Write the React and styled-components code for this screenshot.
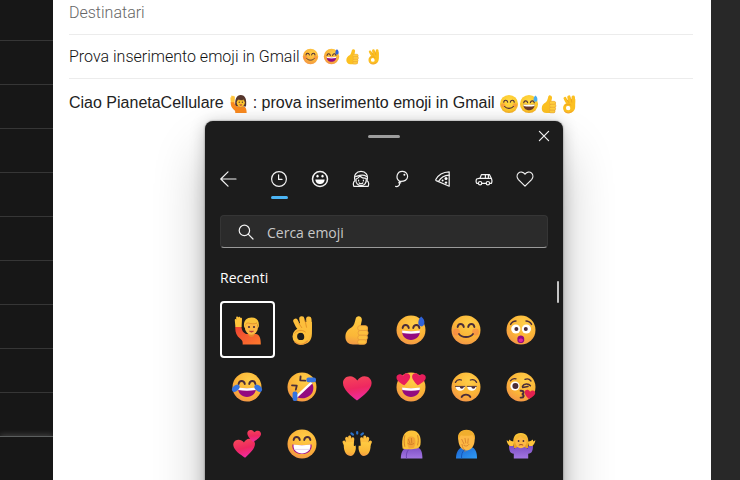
import React, {useState} from 'react'
import styled, {createGlobalStyle, css} from 'styled-components'

const INK = '#4a2d3a'

const Gradients = () => (
  <HiddenSvg width="0" height="0" aria-hidden="true">
    <defs>
      <radialGradient id="face" cx="0.6" cy="0.28" r="0.85">
        <stop offset="0" stopColor="#ffce48" />
        <stop offset="0.55" stopColor="#fbb437" />
        <stop offset="0.85" stopColor="#f49a44" />
        <stop offset="1" stopColor="#e9667c" />
      </radialGradient>
      <radialGradient id="faceFlat" cx="0.5" cy="0.35" r="0.7">
        <stop offset="0" stopColor="#ffdb45" />
        <stop offset="0.75" stopColor="#fcc52a" />
        <stop offset="1" stopColor="#f2a11f" />
      </radialGradient>
      <linearGradient id="skin" x1="0.5" y1="0" x2="0.4" y2="1">
        <stop offset="0" stopColor="#ffcb42" />
        <stop offset="0.7" stopColor="#fbb738" />
        <stop offset="1" stopColor="#f29a45" />
      </linearGradient>
      <linearGradient id="hair" x1="0" y1="0" x2="0" y2="1">
        <stop offset="0" stopColor="#fdcc3c" />
        <stop offset="1" stopColor="#e89a22" />
      </linearGradient>
      <linearGradient id="heart" x1="0.3" y1="0" x2="0.5" y2="1">
        <stop offset="0" stopColor="#f5455a" />
        <stop offset="0.5" stopColor="#ee2860" />
        <stop offset="1" stopColor="#f02ba4" />
      </linearGradient>
      <linearGradient id="orange" x1="0" y1="0" x2="1" y2="1">
        <stop offset="0" stopColor="#ee4232" />
        <stop offset="1" stopColor="#ff7a2c" />
      </linearGradient>
      <linearGradient id="purple" x1="0" y1="0" x2="0" y2="1">
        <stop offset="0" stopColor="#7d4fc4" />
        <stop offset="1" stopColor="#a276e2" />
      </linearGradient>
      <linearGradient id="blue" x1="0" y1="0" x2="1" y2="1">
        <stop offset="0" stopColor="#1b62cf" />
        <stop offset="1" stopColor="#2f9bf5" />
      </linearGradient>
    </defs>
  </HiddenSvg>
)

const HEART = 'M16 29.5C10 25 2 18.5 2 12C2 8 5 5.2 9 5.2C12 5.2 14.5 6.8 16.3 9.5C18 6.8 20.5 5.2 23.5 5.2C27.5 5.2 30.6 8 30.6 12C30.6 18.5 22 25 16 29.5Z'

const Face = ({flat}) => <circle cx="16" cy="16" r="14.5" fill={flat ? 'url(#faceFlat)' : 'url(#face)'} />

const HappyEyes = ({y = 13}) => (
  <g fill="none" stroke={INK} strokeWidth="1.9" strokeLinecap="round">
    <path d={`M7.6 ${y}C8.2 ${y - 4} 13 ${y - 4} 13.8 ${y}`} />
    <path d={`M18.2 ${y}C19 ${y - 4} 23.8 ${y - 4} 24.4 ${y}`} />
  </g>
)

const Laugh = ({flat}) => (
  <>
    <path d="M7 16.8Q16 18.2 25 16.8C25 22.6 21 26 16 26C11 26 7 22.6 7 16.8Z" fill={flat ? '#6b3a2a' : '#930a80'} />
    <path d="M7 16.6Q16 18 25 16.6L24.7 19Q16 20.6 7.3 19Z" fill="#fff" />
  </>
)

const drawings = {
  sweat: flat => (
    <>
      <Face flat={flat} />
      <HappyEyes y={14} />
      <Laugh flat={flat} />
      <path
        d="M26.2 2.4C29 4.5 29.6 7 29.4 9C29.2 11.2 28 12.4 26.4 12.4C24.6 12.4 23.2 11 23.3 8.8C23.4 6.5 24 4.3 26.2 2.4Z"
        fill={flat ? '#49aef0' : '#2f62d8'}
      />
    </>
  ),
  blush: flat => (
    <>
      <Face flat={flat} />
      <circle cx="6.5" cy="18" r="3.4" fill="#f4694e" opacity="0.4" />
      <circle cx="25.5" cy="18" r="3.4" fill="#f4694e" opacity="0.4" />
      <HappyEyes y={13} />
      <path d="M9 20C12 24 20 24 23 20" fill="none" stroke={INK} strokeWidth="1.8" strokeLinecap="round" />
    </>
  ),
  ok: flat => (
    <>
      <path d="M11 11L16 8L25.9 8V20C25.9 26.4 22 30.6 15.4 30.6C19 28 20.6 21 14.6 17.6Z" fill={flat ? '#fcc021' : '#fbba38'} />
      <g fill="none" stroke={flat ? '#fcc021' : '#fdbf3c'} strokeLinecap="round">
        <path d="M9.6 7C10.6 10 12.6 13 15.4 16" strokeWidth="4.8" />
        <path d="M15.8 4.8C16.2 9 17.6 12 19.4 16" strokeWidth="5.2" />
        <path d="M22.8 5.2C23.4 9 23.4 14 22.8 19" strokeWidth="5.4" />
        <circle cx="14.8" cy="22.4" r="6" strokeWidth="4.6" />
      </g>
      <path d="M12.4 8.6L16 14M18.8 5.6L20.6 13.6M8.6 19.6C11 16 16 15.2 19.6 18.2" fill="none" stroke="#e08a24" strokeWidth="0.8" />
      <path d="M9 28C12.6 31.4 18 31 21.4 27" fill="none" stroke="#ee9638" strokeWidth="1.2" strokeLinecap="round" />
    </>
  ),
  thumb: flat => (
    <>
      <path
        d="M14.6 5C15 3 16.4 2 18 2.2C20.2 2.5 21.2 4.4 20.8 6.6L19.6 12H24C26 12 27 13.2 26.8 15L26 27C25.8 29.4 24.6 30.5 22 30.5H12C7.4 30.5 4.4 27.4 4.4 23C4.4 18 7 15.6 10.4 13.6C13 11.6 13.8 8.6 14.6 5Z"
        fill={flat ? '#fcc021' : 'url(#skin)'}
      />
      <g fill={flat ? '#ffcf3d' : '#fdbf3e'} stroke="#e4953a" strokeWidth="0.7">
        <rect x="16.6" y="11.6" width="10" height="5" rx="2.5" />
        <rect x="17" y="16.4" width="10.2" height="5" rx="2.5" />
        <rect x="16.8" y="21.2" width="9.8" height="4.8" rx="2.4" />
        <rect x="16.6" y="25.8" width="8.8" height="4.4" rx="2.2" />
      </g>
    </>
  ),
  raising: flat => (
    <>
      {flat && <path d="M11.6 20C10.6 8 13.6 1.6 20.4 1.6C27.4 1.6 30.2 8 28.8 20Z" fill="#56362d" />}
      <path d="M4.3 12.6H10.4C10.6 16.4 12 19 15 20H25C28.4 20.6 29.8 23.6 29.8 30.5H11.6C12 27 11 26.4 9 24.6C5.4 21.6 4 18 4.3 12.6Z" fill={flat ? '#f98a1f' : 'url(#orange)'} />
      <path d="M4.4 13L3.8 6.4C3.6 4.8 5 4.6 5.2 5.8L5.2 3.6C5.2 2.2 7 2.2 7.2 3.4C7.6 2.2 9.4 2.6 9.4 4C10.4 3.4 11.2 4.2 11 5.4L10.6 13Z" fill="#ffc43b" />
      <path d="M17.4 18H23.4V21C22 23.6 18.8 23.6 17.4 21Z" fill="#e88b2c" />
      <ellipse cx="20.4" cy="13.2" rx="6.6" ry="7.6" fill={flat ? '#fdc52f' : '#fdb944'} />
      <path
        d="M13.2 14C12 7.4 14.8 3.4 20.6 3.4C26.6 3.4 28.8 7.6 27.6 14C26.6 12 26.4 10 25.2 8.6C21.8 10 18 9.4 16 8.6C14.8 9.8 14.4 12 13.2 14Z"
        fill={flat ? '#56362d' : '#f9c33a'}
      />
      <path d="M14.8 10.4C16 9 17 8.8 18 9.2C20.4 10 23.4 9.8 25.8 9.4" fill="none" stroke={flat ? '#56362d' : '#d98a24'} strokeWidth="0.7" />
      <circle cx="18" cy="13" r="1.1" fill={INK} />
      <circle cx="23" cy="13" r="1.1" fill={INK} />
      <path d="M18.4 17.2Q20.5 19.2 22.6 17.2Z" fill="#b02a3c" stroke="#b02a3c" strokeWidth="0.5" />
    </>
  ),
  astonished: () => (
    <>
      <Face />
      <path d="M5.6 10.4C6.8 8 8.6 7 11 7M21 7C23.4 7 25.2 8 26.6 10.4" fill="none" stroke={INK} strokeWidth="1.4" strokeLinecap="round" />
      <circle cx="10.8" cy="15" r="4.6" fill="#fff" />
      <circle cx="21.4" cy="15" r="4.6" fill="#fff" />
      <circle cx="11.4" cy="15" r="2" fill={INK} />
      <circle cx="20.8" cy="15" r="2" fill={INK} />
      <path d="M12.4 24.4C12.4 20.4 19.2 20.4 19.2 24.4V26.4C19.2 29.8 12.4 29.8 12.4 26.4Z" fill="#930a80" />
      <path d="M13.6 26C14 24 17.6 24 18 26C17.8 28.8 13.8 28.8 13.6 26Z" fill="#e0269a" />
    </>
  ),
  joy: () => (
    <>
      <Face />
      <HappyEyes y={13} />
      <Laugh />
      <ellipse cx="4.8" cy="17.2" rx="4.4" ry="2.8" transform="rotate(-42 4.8 17.2)" fill="#3573e0" />
      <ellipse cx="27.2" cy="17.2" rx="4.4" ry="2.8" transform="rotate(42 27.2 17.2)" fill="#3573e0" />
    </>
  ),
  rofl: () => (
    <>
      <Face />
      <path d="M14.6 5.4L14.2 9.4L19.2 9.6M6 14.4L10.8 14.6L9.8 18.6" fill="none" stroke={INK} strokeWidth="1.8" strokeLinecap="round" strokeLinejoin="round" />
      <path d="M10.6 26L25.6 11.4C28.6 15.6 27.6 21.2 24.2 24.2C20.6 27.4 15.2 28.4 10.6 26Z" fill="#930a80" />
      <path d="M9.6 25L24.8 10.8L26.4 12.6L11.4 26.4Z" fill="#fff" />
      <rect x="20.4" y="6.4" width="9.6" height="4.8" rx="2" fill="#3573e0" />
      <rect x="6.6" y="20.6" width="4.8" height="9.4" rx="2" fill="#3573e0" />
    </>
  ),
  heart: () => <path d={HEART} fill="url(#heart)" />,
  heartEyes: () => (
    <>
      <Face />
      <Laugh />
      <g fill="#e81e5c">
        <path d={HEART} transform="translate(0.8 0.2) rotate(-8 8 8) scale(0.48)" />
        <path d={HEART} transform="translate(15.8 0.2) rotate(8 8 8) scale(0.48)" />
      </g>
    </>
  ),
  unamused: () => (
    <>
      <Face />
      <path d="M5.4 11.4C6.6 9.2 9 8.2 11.4 9M20.4 9C23 8.2 25.4 9.2 26.6 11.4" fill="none" stroke={INK} strokeWidth="1.3" strokeLinecap="round" />
      <path d="M5.6 15.6H14.8C14.8 21.2 5.6 21.2 5.6 15.6ZM17.2 15.6H26.4C26.4 21.2 17.2 21.2 17.2 15.6Z" fill="#fff" />
      <path d="M9.8 15.6H13.8C13.8 18.6 9.8 18.6 9.8 15.6ZM21.4 15.6H25.4C25.4 18.6 21.4 18.6 21.4 15.6Z" fill={INK} />
      <path d="M5.4 15.4H14.8M17.2 15.4H26.4" stroke={INK} strokeWidth="0.9" strokeLinecap="round" />
      <path d="M11.6 26C13.4 22.8 18.6 22.8 20.4 26" fill="none" stroke={INK} strokeWidth="1.8" strokeLinecap="round" />
    </>
  ),
  kiss: () => (
    <>
      <Face />
      <path d="M5.4 9.8C6.8 7.8 9 7.2 11 7.8M20 8.4C22 7.4 24.4 8 26 10" fill="none" stroke={INK} strokeWidth="1.3" strokeLinecap="round" />
      <circle cx="10" cy="15" r="4.6" fill="#fff" />
      <circle cx="10.4" cy="15" r="3" fill={INK} />
      <path d="M17.4 15.4C19 12.4 23.4 12 25.4 14.8M17.6 16.4L23 15.6" fill="none" stroke={INK} strokeWidth="1.5" strokeLinecap="round" />
      <path d="M15.6 19.8C19.4 19.6 19.4 22.8 16.8 23.2C19.6 23.6 19.2 27 15.6 26.6" fill="none" stroke={INK} strokeWidth="1.9" strokeLinecap="round" />
      <path d={HEART} transform="translate(19.6 16.4) rotate(8) scale(0.37)" fill="#e3214f" />
    </>
  ),
  hearts: () => (
    <g fill="url(#heart)">
      <path d={HEART} transform="translate(0 8.4) rotate(-5) scale(0.76)" />
      <path d={HEART} transform="translate(16 -1) rotate(6) scale(0.48)" />
    </g>
  ),
  grin: () => (
    <>
      <Face />
      <HappyEyes y={12} />
      <path d="M6.4 16.4Q16 18 25.6 16.4C26.4 22.6 21.6 26 16 26C10.4 26 5.6 22.6 6.4 16.4Z" fill="#a3128c" />
      <path d="M7.6 16.6Q16 18 24.4 16.6C25.2 22.4 21 25.4 16 25.4C11 25.4 6.8 22.4 7.6 16.6Z" fill="#fff" />
      <path d="M7.8 21.4H24.2" stroke="#d5c5e6" strokeWidth="0.7" />
    </>
  ),
  hands: () => (
    <>
      <g fill="none" stroke="#fdbd3e" strokeWidth="3" strokeLinecap="round">
        <path d="M3 14L6 20M5.6 10.4L7.4 18M8.6 9L9.4 18M11.8 10.8L11 19" />
        <path d="M29.4 14L26.4 20M26.8 10.4L25 18M23.8 9L23 18M20.6 10.8L21.4 19" />
      </g>
      <path d="M3 14.6L12.4 14C12 18 13 19 14.4 17.2C15.8 19.8 14 28 9.4 28C4.4 28 2 21.6 3 14.6Z" fill="url(#skin)" />
      <path d="M29.4 14.6L20 14C20.4 18 19.4 19 18 17.2C16.6 19.8 18.4 28 23 28C28 28 30.4 21.6 29.4 14.6Z" fill="url(#skin)" />
      <path d="M10.4 5.4L12 6.6M16.2 4V5.6M22 5.4L20.4 6.6" stroke="#2a6fc4" strokeWidth="2.2" strokeLinecap="round" />
    </>
  ),
  facepalmWoman: () => (
    <>
      <path d="M5.8 30.5C5.8 23 9 18.8 16 18.8H22C26 20.6 27.4 24 27.4 30.5Z" fill="url(#purple)" />
      <path d="M7.6 20.4C6 9 9 2.4 16.6 2.4C23.8 2.4 26.8 8.6 25.4 17C24.8 19.4 23 20.8 20 20.8C15 21.4 12 21.8 7.6 20.4Z" fill="#fcc23a" />
      <path d="M12.6 10.4C14 7.8 18.6 7.8 20 10.6C21 14 20.4 18 18.6 20L14 20.4C12 17.4 11.8 13.6 12.6 10.4Z" fill="#f2a437" />
      <path d="M13.4 11.4L15 15.4M16.4 10.4L16.8 15M12.8 15.4C14.4 17 17 17 18.8 15.6M9.8 7.6C8.8 11 9 15 9.8 18.4M22.6 7.6C23.8 11 23.4 14 22.6 17" fill="none" stroke="#cf7c25" strokeWidth="0.9" strokeLinecap="round" />
      <path d="M13.4 21.8C11.4 24.4 11 27.4 11.6 30.5" fill="none" stroke="#6a42b0" strokeWidth="0.9" />
    </>
  ),
  facepalmMan: () => (
    <>
      <path d="M6 30.5C6 23.6 9 19.4 14 18.8H21C25.4 20.4 27 24 27 30.5Z" fill="url(#blue)" />
      <path d="M8.4 13C7.4 6 10.6 2.2 16.4 2.2C22.6 2.2 25.4 6.6 24.6 13C24 19 20.6 22.4 16.6 22.4C12.2 22.4 9 18.6 8.4 13Z" fill="#fdb944" />
      <path d="M8.2 12C7.2 5.4 10.6 1.8 16.4 1.8C22.6 1.8 25.6 5.4 24.8 12C23.6 10 23.4 8.2 22.4 7C18.4 8.2 14 8 11 7.2C9.8 8.4 9.2 10 8.2 12Z" fill="#f0ae2e" />
      <path d="M11.8 11.4L14 16M15 10.4L15.8 15M18.2 10.8L17.8 15.4M12 16.4C12.4 19.4 13.6 21.6 15 23.4M14 17.6C16 18.6 18 18 19 16.4" fill="none" stroke="#d47c2c" strokeWidth="0.8" strokeLinecap="round" />
      <path d="M14.6 21.6C12 24 11.2 27 11.6 30.5" fill="none" stroke="#1452b4" strokeWidth="0.9" />
    </>
  ),
  shrug: () => (
    <>
      <path d="M8.6 20C7 10 9.4 5 15.8 5C22.2 5 24.4 10 23 20Z" fill="url(#hair)" />
      <path d="M4 17.8H8.4L9.4 20.4L12.6 19H19.4L22.6 20.4L23.6 17.8H28C28 22.6 26.8 25.6 23.2 25.8V30.5H8.8V25.8C5.2 25.6 4 22.6 4 17.8Z" fill="url(#purple)" />
      <path d="M1.6 12.2L4 13.4V11.4L6.4 13L9.2 13.8L8 18H4.6C3 16.4 2 14.6 1.6 12.2ZM30.4 12.2L28 13.4V11.4L25.6 13L22.8 13.8L24 18H27.4C29 16.4 30 14.6 30.4 12.2Z" fill="#ffc43b" />
      <ellipse cx="15.9" cy="13.6" rx="5.6" ry="6.6" fill="#fdb944" />
      <path d="M10 12C10 8 12.4 6.4 16 6.4C19.6 6.4 21.8 8 21.8 12C19 11.2 17 10 15.4 8C14 10 12.4 11.2 10 12Z" fill="#f4b834" />
      <circle cx="13.6" cy="13" r="0.9" fill={INK} />
      <circle cx="18.4" cy="13" r="0.9" fill={INK} />
      <path d="M14.2 17C15.4 16.4 16.6 16.4 17.8 17" fill="none" stroke="#9b3b2e" strokeWidth="0.9" strokeLinecap="round" />
    </>
  )
}

const Emoji = ({name, size, flat, label}) => (
  <EmojiSvg viewBox="0 0 32 32" $size={size} role="img" aria-label={label || name}>
    {drawings[name](flat)}
  </EmojiSvg>
)

const tabs = [
  {
    label: 'Recenti',
    icon: (
      <>
        <circle cx="9" cy="9" r="7.4" />
        <path d="M8.6 4.8V9.4H12" />
      </>
    )
  },
  {
    label: 'Faccine',
    icon: (
      <>
        <circle cx="9" cy="9" r="7.5" strokeWidth="1.5" />
        <path d="M4.4 9.4H13.6C13.6 15.6 4.4 15.6 4.4 9.4Z" fill="#fff" stroke="none" />
        <ellipse cx="6.5" cy="6.2" rx="1.1" ry="1.4" fill="#fff" stroke="none" />
        <ellipse cx="11.5" cy="6.2" rx="1.1" ry="1.4" fill="#fff" stroke="none" />
      </>
    )
  },
  {
    label: 'Persone',
    icon: (
      <>
        <path d="M3 10.4C1.4 5 4.4 1.4 9 1.4C13.6 1.4 16.6 5 15 10.4C17.2 12 16.8 14.6 16.2 16.4H1.8C1.2 14.6 0.8 12 3 10.4Z" />
        <path d="M4 9C5.8 8.6 7 7.6 7.6 6C9.4 7.6 11.6 8.4 14.2 8.4C15 13.4 12 15.6 9 15.6C6 15.6 3.4 13.4 4 9Z" />
        <path d="M3.6 6.6C6 6 10 3.4 14.6 6.4M6.6 10.2V11M11.4 10.2V11M7.2 13C8.4 14 9.6 14 10.8 13" />
      </>
    )
  },
  {
    label: 'Feste e oggetti',
    icon: (
      <>
        <path d="M6.8 11.4C4.4 10 3.6 7.4 4.2 5.2C5 2.4 7.4 1.2 9.8 1.4C12.8 1.6 14.8 4 14.6 6.8C14.4 9.8 11.4 11.8 6.8 11.4Z" />
        <path d="M7 11.6C4.4 12.4 8.4 14 5.6 15.8C4.6 16.6 3.4 16.6 2.6 16.4M5.8 12.6L7.8 12.8" />
        <circle cx="11.4" cy="4.8" r="1" fill="#fff" stroke="none" />
      </>
    )
  },
  {
    label: 'Cibo',
    icon: (
      <>
        <path d="M1.8 9.6C4.4 4.4 9 2 15.2 1.8V16.2L2.2 10.6C1.8 10.4 1.6 10 1.8 9.6Z" />
        <path d="M4.6 11.4C7 7.4 10.4 5.4 15.2 5.2" />
        <circle cx="12" cy="8.6" r="1.5" fill="#fff" stroke="none" />
        <circle cx="8.6" cy="10.6" r="1" fill="#fff" stroke="none" />
        <circle cx="12" cy="12.6" r="1.2" fill="#fff" stroke="none" />
      </>
    )
  },
  {
    label: 'Viaggi',
    icon: (
      <>
        <path d="M3.4 13.4H1.8C1.2 12.6 1 10.4 1.6 9L5 8.2L6.4 4.6H14.4L16.4 8.6C17 10 17 12.2 16.4 13.4H15M6.8 13.4H11.2" />
        <path d="M5 8.4H16M10.4 4.8V8.4M13.4 4.8V8.4" />
        <circle cx="5.1" cy="13.2" r="1.7" />
        <circle cx="12.9" cy="13.2" r="1.7" />
      </>
    )
  },
  {
    label: 'Simboli',
    icon: (
      <path d="M9 16.2L2.4 9.6C0.6 7.6 0.8 4.8 2.4 3.2C4.2 1.4 7.2 1.6 9 4.2C10.8 1.6 13.8 1.4 15.6 3.2C17.2 4.8 17.4 7.6 15.6 9.6Z" />
    )
  }
]

const recent = [
  {name: 'raising', label: 'Uomo con mano alzata'},
  {name: 'ok', label: 'Ok'},
  {name: 'thumb', label: 'Pollice in su'},
  {name: 'sweat', label: 'Sorriso con sudore'},
  {name: 'blush', label: 'Sorriso'},
  {name: 'astonished', label: 'Sorpreso'},
  {name: 'joy', label: 'Lacrime di gioia'},
  {name: 'rofl', label: 'Ridere a crepapelle'},
  {name: 'heart', label: 'Cuore'},
  {name: 'heartEyes', label: 'Occhi a cuore'},
  {name: 'unamused', label: 'Contrariato'},
  {name: 'kiss', label: 'Bacio'},
  {name: 'hearts', label: 'Due cuori'},
  {name: 'grin', label: 'Sorriso a denti stretti'},
  {name: 'hands', label: 'Mani alzate'},
  {name: 'facepalmWoman', label: 'Donna esasperata'},
  {name: 'facepalmMan', label: 'Uomo esasperato'},
  {name: 'shrug', label: 'Donna che scrolla le spalle'}
]

const EmojiPanel = () => {
  const [tab, setTab] = useState('Recenti')
  const [picked, setPicked] = useState('raising')

  return (
    <Panel aria-label="Emoji">
      <PanelHeader>
        <Grip />
        <CloseButton type="button" aria-label="Chiudi">
          <LineSvg viewBox="0 0 12 12" $size={12}>
            <path d="M1.4 1.4L10.6 10.6M10.6 1.4L1.4 10.6" />
          </LineSvg>
        </CloseButton>
      </PanelHeader>
      <Tabs>
        <BackButton type="button" aria-label="Indietro">
          <LineSvg viewBox="0 0 18 18" $size={18}>
            <path d="M8 1.8L0.8 9L8 16.2M0.8 9H16" />
          </LineSvg>
        </BackButton>
        {tabs.map(({label, icon}) => (
          <Tab key={label} type="button" aria-label={label} $active={tab === label} onClick={() => setTab(label)}>
            <LineSvg viewBox="0 0 18 18" $size={18}>
              {icon}
            </LineSvg>
          </Tab>
        ))}
      </Tabs>
      <SearchBox>
        <LineSvg viewBox="0 0 18 18" $size={18}>
          <circle cx="7.4" cy="7.4" r="5.2" />
          <path d="M11.2 11.2L16 16" />
        </LineSvg>
        <SearchInput type="text" placeholder="Cerca emoji" aria-label="Cerca emoji" />
      </SearchBox>
      <SectionTitle>Recenti</SectionTitle>
      <Grid>
        {recent.map(({name, label}) => (
          <Cell key={name} type="button" $selected={picked === name} onClick={() => setPicked(name)}>
            <Emoji name={name} size={32} label={label} />
          </Cell>
        ))}
      </Grid>
      <ScrollThumb />
    </Panel>
  )
}

const App = () => (
  <>
    <GlobalStyle />
    <Gradients />
    <Page>
      <MailList>
        <MailRows>
          {[...Array(9)].map((_, i) => (
            <MailRow key={i} />
          ))}
        </MailRows>
        <MailFooter />
      </MailList>
      <Compose>
        <Field>
          <FieldInput type="text" placeholder="Destinatari" aria-label="Destinatari" />
        </Field>
        <Field>
          <FieldInput type="text" defaultValue="Prova inserimento emoji in Gmail" aria-label="Oggetto" $fit />
          <SubjectEmojis>
            <Emoji name="blush" size={17} />
            <Emoji name="sweat" size={17} />
            <Emoji name="thumb" size={17} flat />
            <Emoji name="ok" size={17} flat />
          </SubjectEmojis>
        </Field>
        <Message role="textbox" aria-label="Corpo del messaggio">
          Ciao PianetaCellulare <Emoji name="raising" size={20} flat /> : prova inserimento emoji in Gmail{' '}
          <Emoji name="blush" size={20} flat />
          <Emoji name="sweat" size={20} flat />
          <Emoji name="thumb" size={20} flat />
          <Emoji name="ok" size={20} flat />
        </Message>
        <EmojiPanel />
      </Compose>
      <Backdrop />
    </Page>
  </>
)

export default App

const GlobalStyle = createGlobalStyle`
  * {
    box-sizing: border-box;
  }
  body {
    margin: 0;
    background: #282828;
    font-family: 'Liberation Sans', Arial, sans-serif;
    overflow: hidden;
  }
  button, input {
    font: inherit;
    border: none;
    background: none;
    padding: 0;
    margin: 0;
    outline: none;
  }
`

const HiddenSvg = styled.svg`
  position: absolute;
`

const EmojiSvg = styled.svg`
  width: ${props => props.$size}px;
  height: ${props => props.$size}px;
  flex: none;
  vertical-align: middle;
`

const LineSvg = styled.svg`
  display: block;
  flex: none;
  width: ${props => props.$size}px;
  height: ${props => props.$size}px;
  fill: none;
  stroke: #f2f2f2;
  stroke-width: 1.2;
  stroke-linecap: round;
  stroke-linejoin: round;
`

const Page = styled.div`
  display: flex;
  height: 100vh;
  overflow: hidden;
`

const MailList = styled.aside`
  display: flex;
  flex-direction: column;
  flex: none;
  width: 53px;
  background: #171717;
`

const MailRows = styled.ul`
  list-style: none;
  margin: -3px 0 0;
  padding: 0;
`

const MailRow = styled.li`
  height: 44px;
  border-bottom: 1px solid #363636;
`

const MailFooter = styled.div`
  flex: 1;
  margin-top: 43px;
  background: #171717;
  border-top: 1px solid #5c5f5f;
  box-shadow: 0 -1px 6px rgba(255, 255, 255, 0.2);
  clip-path: inset(-10px 0 0 0);
`

const Compose = styled.main`
  position: relative;
  flex: 1;
  min-width: 0;
  padding: 0 18px 0 16px;
  background: #fff;
`

const Field = styled.div`
  display: flex;
  align-items: center;
  height: 44px;
  border-bottom: 1px solid #ececec;

  &:first-child {
    margin-top: -9px;
  }
`

const FieldInput = styled.input`
  font-family: Roboto, sans-serif;
  font-size: 16px;
  font-weight: 300;
  line-height: 20px;
  color: #111;
  ${props =>
    props.$fit
      ? css`
          field-sizing: content;
        `
      : css`
          width: 100%;
        `}

  &::placeholder {
    color: #666;
    opacity: 1;
  }
`

const SubjectEmojis = styled.span`
  display: flex;
  gap: 4px;
  padding-left: 2px;
`

const Message = styled.div`
  padding-top: 12px;
  font-size: 16px;
  line-height: 24px;
  color: #222;
  white-space: nowrap;
`

const Backdrop = styled.div`
  flex: none;
  width: 29px;
  background: #282828;
`

/* floats over the message, like the system picker */
const Panel = styled.section`
  position: absolute;
  top: 121px;
  left: 152px;
  bottom: -40px;
  width: 358px;
  padding: 0 15px;
  border-radius: 8px;
  background: #1c1c1c;
  color: #fff;
  font-family: 'Open Sans', 'Noto Sans', sans-serif;
  font-size: 14px;
  box-shadow: 0 0 2px rgba(0, 0, 0, 0.5), 0 2px 16px rgba(0, 0, 0, 0.22), 0 32px 52px rgba(0, 0, 0, 0.24);
`

const PanelHeader = styled.div`
  display: grid;
  grid-template-columns: 1fr 32px 1fr;
  align-items: center;
  height: 30px;
  margin: 0 -2px;
`

const Grip = styled.span`
  grid-column: 2;
  height: 3px;
  border-radius: 2px;
  background: #9d9d9d;
`

const CloseButton = styled.button`
  justify-self: end;
`

const Tabs = styled.nav`
  display: flex;
  align-items: center;
  height: 56px;
`

const BackButton = styled.button`
  width: 38px;
`

const Tab = styled.button`
  position: relative;
  display: flex;
  align-items: center;
  justify-content: center;
  width: 41px;
  height: 56px;

  ${props =>
    props.$active &&
    css`
      &::after {
        content: '';
        position: absolute;
        left: 13px;
        bottom: 8px;
        width: 17px;
        height: 3px;
        border-radius: 2px;
        background: #4cb5f5;
      }
    `}
`

const SearchBox = styled.label`
  display: flex;
  align-items: center;
  gap: 12px;
  height: 33px;
  margin-top: 8px;
  padding: 1px 16px 0;
  border: 1px solid #353535;
  border-bottom-color: #9a9a9a;
  border-radius: 4px;
  background: #2b2b2b;
`

const SearchInput = styled.input`
  flex: 1;
  min-width: 0;
  color: #fff;

  &::placeholder {
    color: #c8c8c8;
    opacity: 1;
  }
`

const SectionTitle = styled.h2`
  margin: 20px 0 13px;
  font-size: 14px;
  line-height: 20px;
  font-weight: 400;
`

const Grid = styled.div`
  display: grid;
  grid-template-columns: repeat(6, 1fr);
  grid-auto-rows: 57px;
`

const Cell = styled.button`
  display: flex;
  align-items: center;
  justify-content: center;
  border: 2px solid ${props => (props.$selected ? '#fff' : 'transparent')};
  border-radius: 4px;
`

const ScrollThumb = styled.span`
  position: absolute;
  top: 160px;
  right: 4px;
  width: 2px;
  height: 22px;
  border-radius: 1px;
  background: #c4c4c4;
`
